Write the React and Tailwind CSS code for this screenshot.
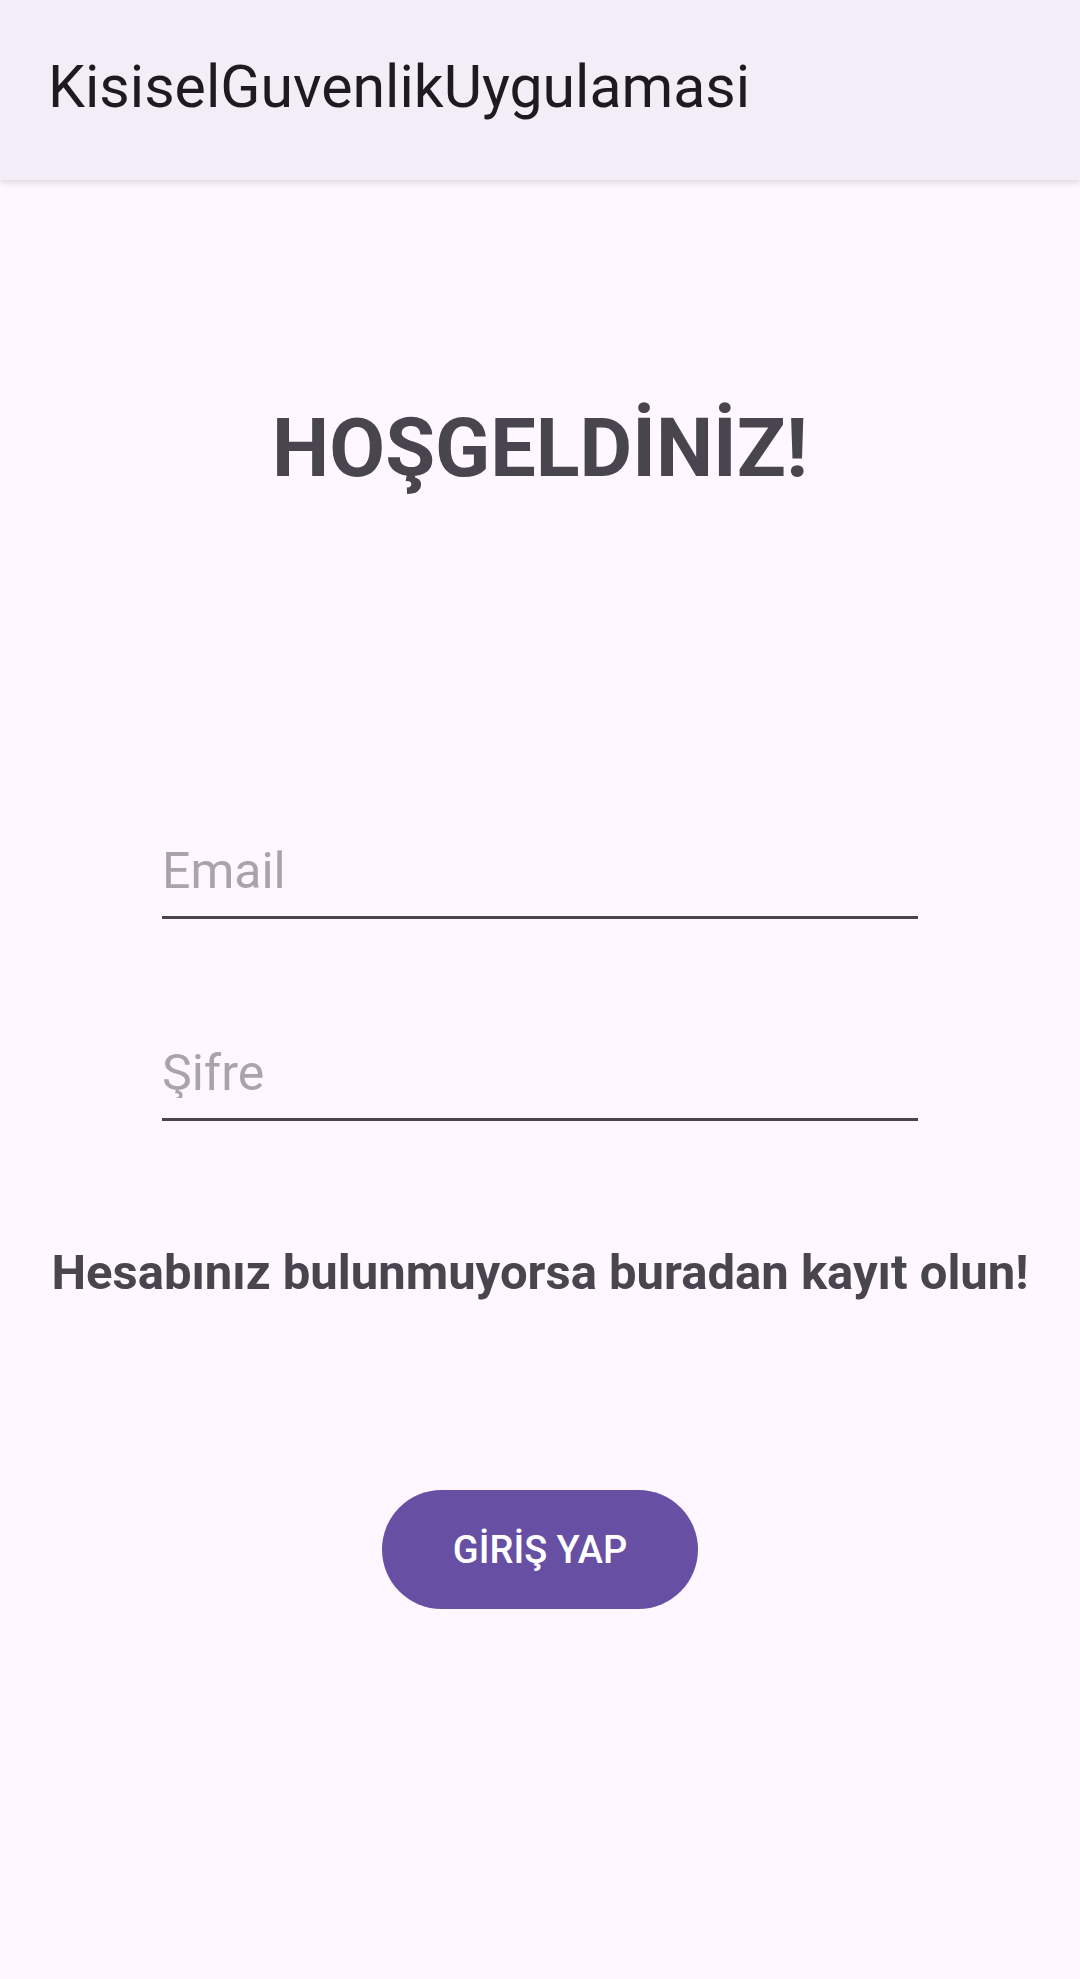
export default function App() {
  return (
    <div className="min-h-[1979px] w-[1080px] bg-[#fef7ff] font-['Roboto',sans-serif] flex flex-col">
      {/* App bar */}
      <header className="h-[180px] bg-[#f3edf7] flex items-center pl-[48px] pb-[7px] shadow-[0_3px_6px_rgba(0,0,0,0.12)] relative z-10">
        <h1 className="text-[59px] leading-none text-[#1d1b20] font-normal">KisiselGuvenlikUygulamasi</h1>
      </header>

      <main className="flex flex-col items-center">
        <h2 className="mt-[228px] text-[81px] leading-none font-bold text-[#48454e]">HOŞGELDİNİZ!</h2>

        <div className="mt-[357px] w-[756px] border-b-[3px] border-[#49454f] pb-[20px]">
          <input
            type="email"
            placeholder="Email"
            className="w-full bg-transparent outline-none text-[50px] leading-none h-[50px] text-[#1d1b20] placeholder:text-[#a9a4ac]"
          />
        </div>

        <div className="mt-[129px] w-[756px] border-b-[3px] border-[#49454f] pb-[20px]">
          <input
            type="password"
            placeholder="Şifre"
            className="w-full bg-transparent outline-none text-[50px] leading-none h-[50px] text-[#1d1b20] placeholder:text-[#a9a4ac]"
          />
        </div>

        <p className="mt-[127px] text-[49px] leading-none font-bold text-[#48454e]">
          Hesabınız bulunmuyorsa buradan kayıt olun!
        </p>

        <button className="mt-[193px] w-[316px] h-[119px] rounded-full bg-[#6750a4] text-white text-[38px] font-medium leading-none">
          GİRİŞ YAP
        </button>
      </main>
    </div>
  )
}
